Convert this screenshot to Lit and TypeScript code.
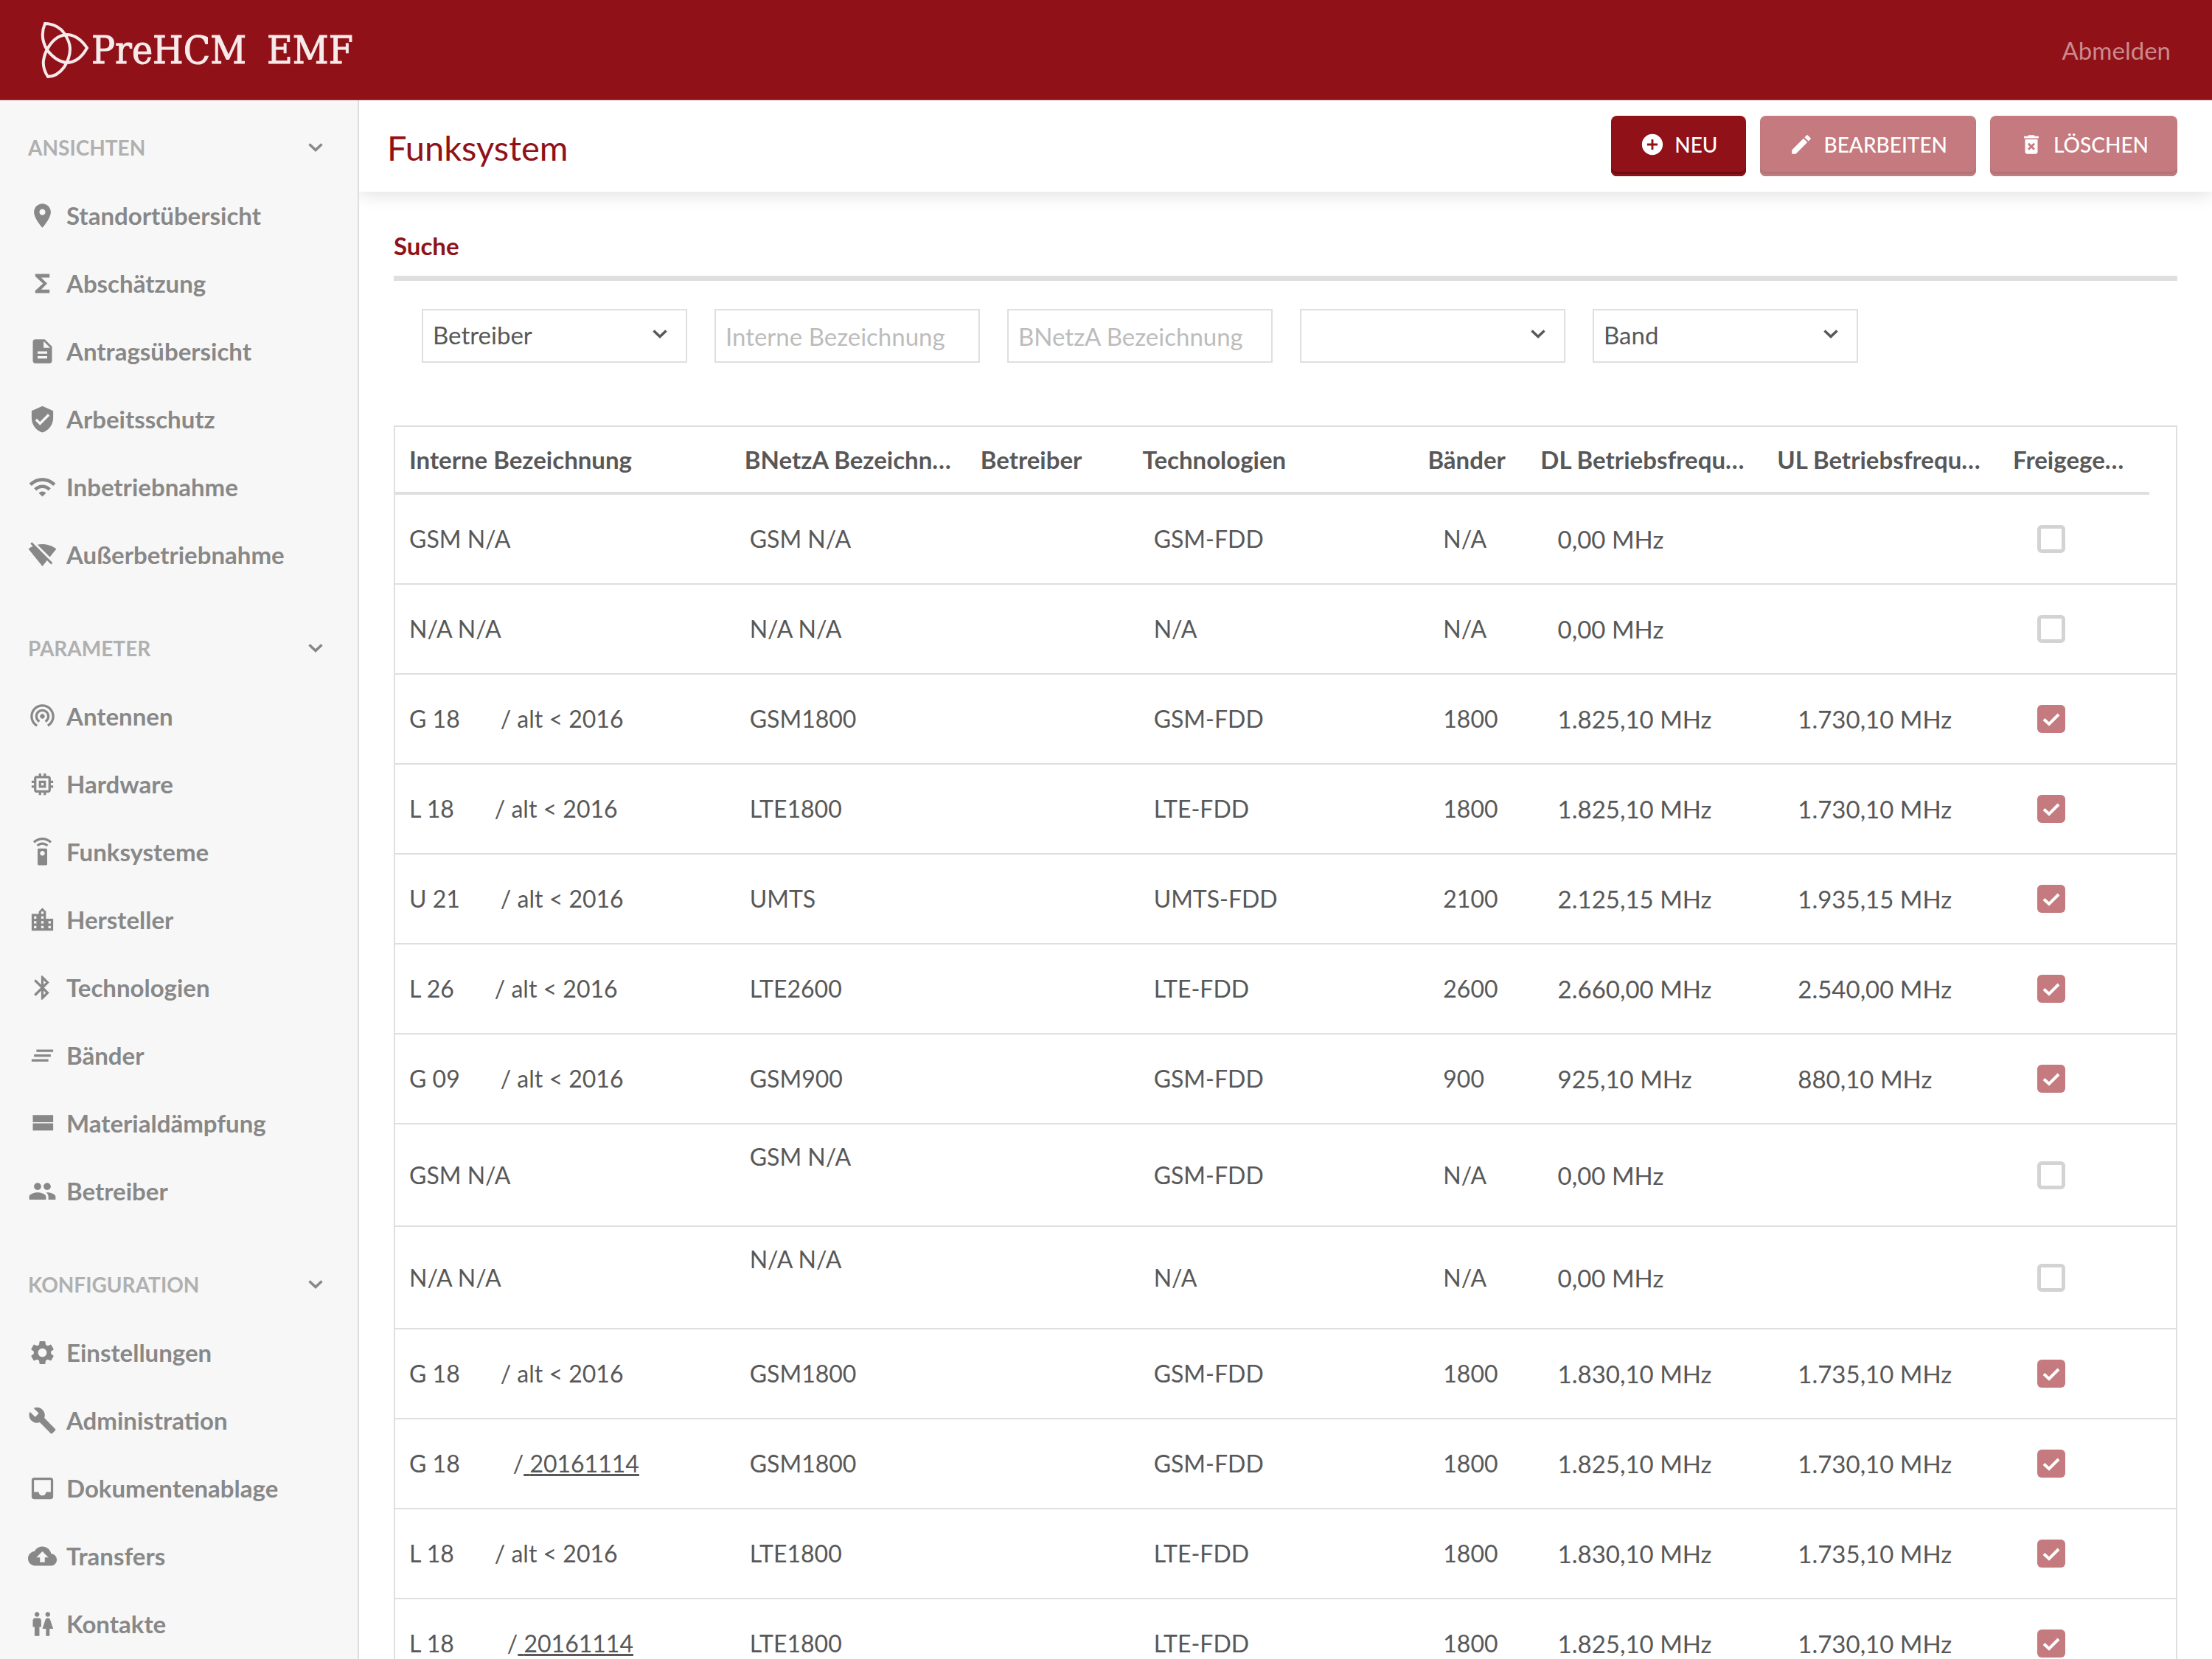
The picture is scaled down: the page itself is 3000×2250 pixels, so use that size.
import { LitElement, html, css, svg } from "lit";
import { customElement } from "lit/decorators.js";

type Row = {
  name: string;
  suffix?: string;
  underlined?: boolean;
  bnetza: string;
  tech: string;
  band: string;
  dl: string;
  ul: string;
  released: boolean;
  tall?: boolean;
};

const row = (
  name: string,
  suffix: string,
  bnetza: string,
  tech: string,
  band: string,
  dl: string,
  ul: string,
  extra: Partial<Row> = {}
): Row => ({ name, suffix, bnetza, tech, band, dl, ul, released: ul !== "", ...extra });

const ROWS: Row[] = [
  row("GSM N/A", "", "GSM N/A", "GSM-FDD", "N/A", "0,00 MHz", ""),
  row("N/A N/A", "", "N/A N/A", "N/A", "N/A", "0,00 MHz", ""),
  row("G 18", "alt < 2016", "GSM1800", "GSM-FDD", "1800", "1.825,10 MHz", "1.730,10 MHz"),
  row("L 18", "alt < 2016", "LTE1800", "LTE-FDD", "1800", "1.825,10 MHz", "1.730,10 MHz"),
  row("U 21", "alt < 2016", "UMTS", "UMTS-FDD", "2100", "2.125,15 MHz", "1.935,15 MHz"),
  row("L 26", "alt < 2016", "LTE2600", "LTE-FDD", "2600", "2.660,00 MHz", "2.540,00 MHz"),
  row("G 09", "alt < 2016", "GSM900", "GSM-FDD", "900", "925,10 MHz", "880,10 MHz"),
  row("GSM N/A", "", "GSM N/A", "GSM-FDD", "N/A", "0,00 MHz", "", { tall: true }),
  row("N/A N/A", "", "N/A N/A", "N/A", "N/A", "0,00 MHz", "", { tall: true }),
  row("G 18", "alt < 2016", "GSM1800", "GSM-FDD", "1800", "1.830,10 MHz", "1.735,10 MHz"),
  row("G 18", "20161114", "GSM1800", "GSM-FDD", "1800", "1.825,10 MHz", "1.730,10 MHz", { underlined: true }),
  row("L 18", "alt < 2016", "LTE1800", "LTE-FDD", "1800", "1.830,10 MHz", "1.735,10 MHz"),
  row("L 18", "20161114", "LTE1800", "LTE-FDD", "1800", "1.825,10 MHz", "1.730,10 MHz", { underlined: true }),
];

const HEADS = [
  "Interne Bezeichnung",
  "BNetzA Bezeichnung",
  "Betreiber",
  "Technologien",
  "Bänder",
  "DL Betriebsfrequenz",
  "UL Betriebsfrequenz",
  "Freigegeben",
];

const ICONS: Record<string, string> = {
  place: "M12 2C8.13 2 5 5.13 5 9c0 5.25 7 13 7 13s7-7.75 7-13c0-3.87-3.13-7-7-7zm0 9.5c-1.38 0-2.5-1.12-2.5-2.5s1.12-2.5 2.5-2.5 2.5 1.12 2.5 2.5-1.12 2.5-2.5 2.5z",
  functions: "M18 4H6v2l6.5 6L6 18v2h12v-3h-7l5-5-5-5h7z",
  description: "M14 2H6c-1.100 0-1.990.9-1.990 2L4 20c0 1.100.890 2 1.990 2H18c1.100 0 2-.9 2-2V8l-6-6zm2 16H8v-2h8v2zm0-4H8v-2h8v2zm-3-5V3.500L18.500 9H13z",
  shield: "M12 1L3 5v6c0 5.550 3.840 10.740 9 12 5.160-1.260 9-6.450 9-12V5l-9-4zm-2 16l-4-4 1.410-1.410L10 14.170l6.590-6.590L18 9l-8 8z",
  wifi: "M1 9l2 2c4.970-4.970 13.030-4.970 18 0l2-2C16.930 2.930 7.080 2.930 1 9zm8 8l3 3 3-3c-1.650-1.660-4.340-1.660-6 0zm-4-4l2 2c2.760-2.760 7.240-2.760 10 0l2-2C15.140 9.140 8.870 9.140 5 13z",
  wifioff: "M23.640 7c-.450-.340-4.930-4-11.640-4-1.500 0-2.890.190-4.150.480L18.180 13.800 23.640 7zm-6.600 8.220L3.270 1.440 2 2.720l2.050 2.060C1.910 5.760.590 6.820.360 7l11.630 14.490.010.010.010-.010 3.900-4.860 3.320 3.320 1.270-1.270-3.460-3.460z",
  antenna: "M12 10c-1.100 0-2 .9-2 2s.9 2 2 2 2-.9 2-2-.9-2-2-2zm6 2c0-3.310-2.690-6-6-6s-6 2.690-6 6c0 2.220 1.210 4.150 3 5.190l1-1.740c-1.190-.7-2-1.970-2-3.450 0-2.210 1.790-4 4-4s4 1.790 4 4c0 1.480-.81 2.750-2 3.450l1 1.740c1.790-1.040 3-2.970 3-5.190zM12 2C6.480 2 2 6.480 2 12c0 3.700 2.010 6.920 4.990 8.650l1-1.730C5.610 17.530 4 14.960 4 12c0-4.420 3.580-8 8-8s8 3.580 8 8c0 2.960-1.610 5.530-4 6.920l1 1.730c2.990-1.730 5-4.950 5-8.650 0-5.520-4.480-10-10-10z",
  memory: "M15 9H9v6h6V9zm-2 4h-2v-2h2v2zm8-2V9h-2V7c0-1.100-.9-2-2-2h-2V3h-2v2h-2V3H9v2H7c-1.100 0-2 .9-2 2v2H3v2h2v2H3v2h2v2c0 1.100.9 2 2 2h2v2h2v-2h2v2h2v-2h2c1.100 0 2-.9 2-2v-2h2v-2h-2v-2h2zm-4 6H7V7h10v10z",
  remote: "M15 9H9c-.550 0-1 .450-1 1v12c0 .550.450 1 1 1h6c.550 0 1-.450 1-1V10c0-.550-.450-1-1-1zm-3 6c-1.100 0-2-.9-2-2s.9-2 2-2 2 .9 2 2-.9 2-2 2zM7.050 6.050l1.410 1.410C9.370 6.560 10.620 6 12 6s2.630.560 3.540 1.460l1.410-1.410C15.680 4.780 13.930 4 12 4s-3.680.780-4.950 2.050zM12 0C8.960 0 6.210 1.230 4.220 3.220l1.410 1.410C7.260 3.010 9.510 2 12 2s4.740 1.010 6.360 2.640l1.410-1.410C17.790 1.230 15.040 0 12 0z",
  city: "M15 11V5l-3-3-3 3v2H3v14h18V11h-6zm-8 8H5v-2h2v2zm0-4H5v-2h2v2zm0-4H5V9h2v2zm6 8h-2v-2h2v2zm0-4h-2v-2h2v2zm0-4h-2V9h2v2zm0-4h-2V5h2v2zm6 12h-2v-2h2v2zm0-4h-2v-2h2v2z",
  bluetooth: "M17.710 7.710L12 2h-1v7.590L6.410 5 5 6.410 10.590 12 5 17.590 6.410 19 11 14.410V22h1l5.710-5.710-4.300-4.290 4.300-4.290zM13 5.830l1.880 1.880L13 9.590V5.830zm1.880 10.460L13 18.170v-3.760l1.880 1.880z",
  clear: "M5 13h14v-2H5v2zm-2 4h14v-2H3v2zM7 7v2h14V7H7z",
  stream: "M4 18h17v-6H4v6zM4 5v6h17V5H4z",
  people: "M16 11c1.660 0 2.990-1.340 2.990-3S17.660 5 16 5c-1.660 0-3 1.340-3 3s1.340 3 3 3zm-8 0c1.660 0 2.990-1.340 2.990-3S9.660 5 8 5C6.340 5 5 6.340 5 8s1.340 3 3 3zm0 2c-2.330 0-7 1.170-7 3.500V19h14v-2.500c0-2.330-4.670-3.500-7-3.500zm8 0c-.290 0-.620.020-.970.050 1.160.840 1.970 1.970 1.970 3.450V19h6v-2.500c0-2.330-4.670-3.500-7-3.500z",
  settings: "M19.140 12.940c.040-.3.060-.610.060-.940 0-.320-.020-.640-.070-.940l2.030-1.580c.180-.140.230-.410.120-.610l-1.920-3.320c-.120-.220-.370-.290-.590-.220l-2.390.960c-.5-.380-1.030-.7-1.620-.940l-.360-2.540c-.040-.240-.240-.410-.480-.410h-3.840c-.240 0-.430.170-.470.410l-.360 2.540c-.590.240-1.130.570-1.620.940l-2.390-.960c-.220-.080-.470 0-.590.220L2.740 8.870c-.120.210-.080.470.120.610l2.030 1.580c-.050.3-.090.630-.090.940s.020.640.070.940l-2.030 1.580c-.180.140-.230.410-.120.610l1.920 3.320c.120.220.370.290.590.220l2.390-.960c.5.380 1.030.7 1.620.940l.360 2.540c.050.240.240.410.480.410h3.840c.240 0 .440-.170.470-.410l.360-2.540c.590-.240 1.130-.560 1.620-.940l2.390.960c.220.080.470 0 .590-.220l1.920-3.320c.120-.220.070-.470-.120-.610l-2.010-1.580zM12 15.600c-1.980 0-3.600-1.620-3.600-3.600s1.620-3.600 3.600-3.600 3.600 1.620 3.600 3.600-1.620 3.600-3.600 3.600z",
  build: "M22.700 19l-9.100-9.100c.9-2.300.4-5-1.500-6.900-2-2-5-2.400-7.400-1.300L9 6 6 9 1.600 4.700C.4 7.100.9 10.100 2.900 12.100c1.900 1.900 4.600 2.400 6.900 1.500l9.100 9.100c.4.4 1 .4 1.400 0l2.300-2.300c.5-.4.5-1.100.1-1.400z",
  inbox: "M19 3H4.990c-1.110 0-1.980.890-1.980 2L3 19c0 1.100.880 2 1.990 2H19c1.100 0 2-.9 2-2V5c0-1.110-.9-2-2-2zm0 12h-4c0 1.660-1.350 3-3 3s-3-1.340-3-3H4.990V5H19v10z",
  cloud: "M19.350 10.040C18.670 6.590 15.640 4 12 4 9.110 4 6.600 5.640 5.350 8.040 2.340 8.360 0 10.910 0 14c0 3.310 2.690 6 6 6h13c2.760 0 5-2.240 5-5 0-2.640-2.050-4.780-4.650-4.960zM14 13v4h-4v-4H7l5-5 5 5h-3z",
  wc: "M5.500 22v-7.500H4V9c0-1.100.9-2 2-2h3c1.100 0 2 .9 2 2v5.500H9.500V22h-4zM18 22v-6h3l-2.540-7.630C18.180 7.550 17.420 7 16.560 7h-.120c-.860 0-1.630.550-1.900 1.370L12 16h3v6h3zM7.500 6c1.110 0 2-.890 2-2s-.890-2-2-2-2 .890-2 2 .890 2 2 2zm9 0c1.110 0 2-.890 2-2s-.890-2-2-2-2 .890-2 2 .890 2 2 2z",
  add: "M12 2C6.480 2 2 6.480 2 12s4.480 10 10 10 10-4.480 10-10S17.520 2 12 2zm5 11h-4v4h-2v-4H7v-2h4V7h2v4h4v2z",
  edit: "M3 17.250V21h3.750L17.810 9.940l-3.750-3.750L3 17.250zM20.710 7.040c.390-.390.390-1.020 0-1.410l-2.340-2.340c-.390-.390-1.020-.390-1.410 0l-1.830 1.830 3.750 3.750 1.830-1.830z",
  trash: "M6 19c0 1.100.9 2 2 2h8c1.100 0 2-.9 2-2V7H6v12zm2.460-7.120l1.410-1.410L12 12.590l2.120-2.120 1.410 1.410L13.410 14l2.120 2.120-1.410 1.410L12 15.410l-2.120 2.120-1.410-1.410L10.590 14l-2.130-2.120zM15.500 4l-1-1h-5l-1 1H5v2h14V4z",
};

const icon = (name: string) =>
  html`<svg class="icon" viewBox="0 0 24 24" aria-hidden="true">${svg`<path d=${ICONS[name]} />`}</svg>`;

const chevron = () =>
  html`<svg class="chevron" viewBox="0 0 20 12" aria-hidden="true"><path d="M1.500 1.500 L10 9.500 L18.500 1.500" /></svg>`;

const SECTIONS: { title: string; items: [string, string][] }[] = [
  {
    title: "ANSICHTEN",
    items: [
      ["place", "Standortübersicht"],
      ["functions", "Abschätzung"],
      ["description", "Antragsübersicht"],
      ["shield", "Arbeitsschutz"],
      ["wifi", "Inbetriebnahme"],
      ["wifioff", "Außerbetriebnahme"],
    ],
  },
  {
    title: "PARAMETER",
    items: [
      ["antenna", "Antennen"],
      ["memory", "Hardware"],
      ["remote", "Funksysteme"],
      ["city", "Hersteller"],
      ["bluetooth", "Technologien"],
      ["clear", "Bänder"],
      ["stream", "Materialdämpfung"],
      ["people", "Betreiber"],
    ],
  },
  {
    title: "KONFIGURATION",
    items: [
      ["settings", "Einstellungen"],
      ["build", "Administration"],
      ["inbox", "Dokumentenablage"],
      ["cloud", "Transfers"],
      ["wc", "Kontakte"],
    ],
  },
];

@customElement("app-root")
export class AppRoot extends LitElement {
  static styles = css`
    :host {
      display: flex;
      flex-direction: column;
      height: 100vh;
      overflow: hidden;
      background: #fff;
      color: #585858;
      font: 400 33px/50px Lato, "Liberation Sans", sans-serif;
    }
    * {
      box-sizing: border-box;
    }
    a {
      color: inherit;
      text-decoration: none;
    }
    button,
    input,
    select {
      font: inherit;
      color: inherit;
      margin: 0;
    }
    .icon {
      fill: currentColor;
      flex: none;
    }
    .chevron {
      width: 20px;
      height: 12px;
      fill: none;
      stroke: currentColor;
      stroke-width: 3.5;
      flex: none;
    }
    .topbar {
      display: flex;
      align-items: center;
      justify-content: space-between;
      flex: none;
      height: 136px;
      padding: 0 56px 0 54px;
      background: #901218;
      border-bottom: 1px solid #a63b40;
    }
    .brand {
      display: flex;
      align-items: center;
      color: #f6eaea;
      font: 400 53px/60px "DejaVu Serif Condensed", "DejaVu Serif", serif;
      -webkit-text-stroke: 1px currentColor;
    }
    .mark {
      width: 68px;
      height: 80px;
      margin-right: 2px;
      fill: none;
      stroke: currentColor;
      stroke-width: 4;
    }
    .brand-sub {
      margin-left: 28px;
    }
    .logout {
      color: #cc8a8d;
    }
    .shell {
      display: flex;
      flex: 1;
      min-height: 0;
    }
    .sidebar {
      flex: none;
      width: 487px;
      padding: 18px 0;
      background: #f7f7f7;
      border-right: 2px solid #dedede;
      overflow: hidden;
    }
    .section {
      margin-bottom: 35px;
    }
    .section-head {
      display: flex;
      align-items: center;
      justify-content: space-between;
      width: 100%;
      height: 92px;
      padding: 0 47px 0 38px;
      border: 0;
      background: none;
      color: #888;
      font-size: 28px;
      font-weight: 700;
    }
    .section-title {
      color: #b0b0b0;
    }
    .nav {
      list-style: none;
      margin: 0;
      padding: 0;
    }
    .nav-link {
      display: flex;
      align-items: center;
      gap: 13px;
      height: 92px;
      padding-left: 38px;
      color: #888;
      font-weight: 700;
    }
    .nav-link .icon {
      width: 39px;
      height: 39px;
    }
    .main {
      flex: 1;
      min-width: 0;
      display: flex;
      flex-direction: column;
    }
    .pagebar {
      display: flex;
      align-items: center;
      justify-content: space-between;
      flex: none;
      height: 124px;
      padding: 0 47px 0 38px;
      box-shadow: 0 2px 24px rgba(0, 0, 0, 0.14);
      clip-path: inset(0 0 -40px 0);
    }
    .title {
      margin: 0;
      padding-top: 4px;
      color: #901218;
      font-size: 47px;
      font-weight: 400;
      line-height: 60px;
    }
    .actions {
      display: flex;
      gap: 19px;
    }
    .btn {
      display: flex;
      align-items: center;
      gap: 13px;
      height: 82px;
      padding: 0 39px 4px;
      border: 0;
      border-radius: 8px;
      background: #901218;
      box-shadow: inset 0 -3px 0 #901218, inset 0 -6px 1px #6b0d12;
      color: #fff;
      font-size: 28px;
      font-weight: 500;
    }
    .btn .icon {
      width: 34px;
      height: 34px;
    }
    .btn:disabled {
      background: #c47a7e;
      box-shadow: inset 0 -3px 0 #c47a7e, inset 0 -6px 1px #ab767a;
    }
    .content {
      flex: 1;
      min-height: 0;
      display: flex;
      flex-direction: column;
      padding: 48px 47px 0;
      overflow: hidden;
    }
    .search-title {
      flex: none;
      margin: 0;
      padding-bottom: 16px;
      border-bottom: 7px solid #dfdfdf;
      color: #901218;
      font-size: 33px;
      font-weight: 700;
      line-height: 50px;
    }
    .filters {
      display: flex;
      flex: none;
      gap: 37px;
      padding: 38px 38px 85px;
    }
    .field {
      position: relative;
      display: flex;
      width: 360px;
    }
    .control {
      width: 100%;
      height: 73px;
      padding: 0 13px;
      border: 2px solid #dfdfdf;
      border-radius: 0;
      background: #fff;
      appearance: none;
      outline: none;
    }
    .control::placeholder {
      color: #bcbcbc;
      opacity: 1;
    }
    .picker {
      padding-bottom: 4px;
    }
    .field .chevron {
      position: absolute;
      right: 27px;
      top: 28px;
      pointer-events: none;
    }
    .grid {
      display: flex;
      flex-direction: column;
      flex: 1;
      min-height: 0;
      border: 2px solid #dfdfdf;
      border-bottom: 0;
      overflow: hidden;
    }
    .table,
    .thead,
    .tbody {
      display: block;
    }
    .tr {
      display: grid;
      grid-template-columns: 455fr 320fr 220fr 387fr 153fr 321fr 320fr 204fr;
      align-items: center;
      min-height: 122px;
      border-bottom: 2px solid #dfdfdf;
    }
    .thead .tr {
      min-height: 92px;
      margin-right: 36px;
      border-bottom-width: 4px;
    }
    .th,
    .td {
      min-width: 0;
      padding: 0 19px;
      text-align: left;
      white-space: nowrap;
    }
    .td {
      font-size: 32px;
    }
    .td.freq {
      font-size: 33px;
    }
    .th {
      overflow: hidden;
      text-overflow: ellipsis;
      font-weight: 700;
    }
    .tall {
      min-height: 139px;
    }
    .tall .bnetza {
      padding-bottom: 50px;
    }
    .name {
      display: flex;
      white-space: pre;
    }
    .suffix {
      margin-left: 55px;
    }
    .suffix-wide {
      margin-left: 72px;
    }
    .check {
      display: block;
      width: 38px;
      height: 38px;
      margin: 0;
      appearance: none;
      border: 5px solid #d3d3d3;
      border-radius: 6px;
      background: #fff;
    }
    .check:checked {
      border: 0;
      background: #c47a7e;
    }
    .tick {
      position: relative;
      display: block;
    }
    .tick .mark-path {
      position: absolute;
      left: 7px;
      top: 10px;
      width: 24px;
      height: 19px;
      fill: none;
      stroke: #fff;
      stroke-width: 4;
      pointer-events: none;
    }
  `;

  private picker(label: string, text: string) {
    return html`<label class="field">
      <select class="control picker" aria-label=${label}>
        <option>${text}</option>
      </select>
      ${chevron()}
    </label>`;
  }

  private textbox(label: string) {
    return html`<label class="field">
      <input class="control" type="text" aria-label=${label} placeholder=${label} />
    </label>`;
  }

  private renderRow(r: Row) {
    const suffix = !r.suffix
      ? ""
      : r.underlined
        ? html`<span class="suffix-wide">/<u> ${r.suffix}</u></span>`
        : html`<span class="suffix">/ ${r.suffix}</span>`;
    return html`<tr class="tr ${r.tall ? "tall" : ""}">
      <td class="td name">${r.name}${suffix}</td>
      <td class="td bnetza">${r.bnetza}</td>
      <td class="td"></td>
      <td class="td">${r.tech}</td>
      <td class="td">${r.band}</td>
      <td class="td freq">${r.dl}</td>
      <td class="td freq">${r.ul}</td>
      <td class="td">
        <label class="tick">
          <input class="check" type="checkbox" aria-label="Freigegeben" .checked=${r.released} disabled />
          ${r.released
            ? html`<svg class="mark-path" viewBox="0 0 24 19" aria-hidden="true"><path d="M2 9.500 L9 16 L22 3" /></svg>`
            : ""}
        </label>
      </td>
    </tr>`;
  }

  render() {
    return html`
      <header class="topbar">
        <div class="brand">
          <svg class="mark" viewBox="0 0 68 80" aria-hidden="true">
            <path d="M7 4 C20 4 29 11 33 17 C39 26 41 32 41 38 C41 46 39 54 33 63 C27 71 20 76 11 76 C7 70 4 62 5 54 C6 47 8 41 13 34 C19 25 27 19 38 19 C49 20 58 28 64 37 C58 48 49 57 36 57 C26 56 17 49 10 40 C4 30 1 18 7 4 Z" />
          </svg>
          <span>PreHCM</span>
          <span class="brand-sub">EMF</span>
        </div>
        <a class="logout" href="#">Abmelden</a>
      </header>
      <div class="shell">
        <aside class="sidebar">
          ${SECTIONS.map(
            (s) => html`<section class="section">
              <button class="section-head" type="button">
                <span class="section-title">${s.title}</span>${chevron()}
              </button>
              <ul class="nav">
                ${s.items.map(
                  ([name, label]) => html`<li><a class="nav-link" href="#">${icon(name)}<span>${label}</span></a></li>`
                )}
              </ul>
            </section>`
          )}
        </aside>
        <main class="main">
          <div class="pagebar">
            <h1 class="title">Funksystem</h1>
            <div class="actions">
              <button class="btn" type="button">${icon("add")}<span>NEU</span></button>
              <button class="btn" type="button" disabled>${icon("edit")}<span>BEARBEITEN</span></button>
              <button class="btn" type="button" disabled>${icon("trash")}<span>LÖSCHEN</span></button>
            </div>
          </div>
          <div class="content">
            <h2 class="search-title">Suche</h2>
            <form class="filters">
              ${this.picker("Betreiber", "Betreiber")} ${this.textbox("Interne Bezeichnung")}
              ${this.textbox("BNetzA Bezeichnung")} ${this.picker("Technologie", "")}
              ${this.picker("Band", "Band")}
            </form>
            <div class="grid">
              <table class="table">
                <thead class="thead">
                  <tr class="tr">
                    ${HEADS.map((h) => html`<th class="th" scope="col">${h}</th>`)}
                  </tr>
                </thead>
                <tbody class="tbody">
                  ${ROWS.map((r) => this.renderRow(r))}
                </tbody>
              </table>
            </div>
          </div>
        </main>
      </div>
    `;
  }
}
